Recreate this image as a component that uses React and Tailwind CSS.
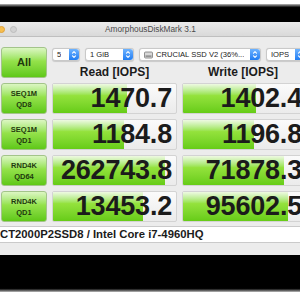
import React from 'react';

const rows = [
    { l1: 'SEQ1M', l2: 'QD8', read: '1470.7', readBar: 74, write: '1402.4', writeBar: 73 },
    { l1: 'SEQ1M', l2: 'QD1', read: '1184.8', readBar: 71, write: '1196.8', writeBar: 71 },
    { l1: 'RND4K', l2: 'QD64', read: '262743.8', readBar: 112, write: '71878.3', writeBar: 101 },
    { l1: 'RND4K', l2: 'QD1', read: '13453.2', readBar: 90, write: '95602.5', writeBar: 105 },
];

const Stepper = () => (
    <div className="w-[10px] h-full rounded-r-[3px] bg-linear-to-b from-[#6db3ff] to-[#1d7cf2] flex items-center justify-center">
        <svg width="6" height="9" viewBox="0 0 6 9" fill="none" stroke="white" strokeWidth="1.1" strokeLinecap="round" strokeLinejoin="round">
            <path d="M1.5 3.2L3 1.7l1.5 1.5" />
            <path d="M1.5 5.8L3 7.3l1.5-1.5" />
        </svg>
    </div>
);

const Select = ({ width, children }) => (
    <div
        className="h-[13px] bg-white rounded-[3px] border border-[#c9c9c9] shadow-[0_0.5px_1px_rgba(0,0,0,0.15)] flex items-stretch justify-between shrink-0"
        style={{ width }}
    >
        <div className="flex items-center gap-[3px] pl-[4px] text-[7.6px] leading-none text-[#222] whitespace-nowrap overflow-hidden">
            {children}
        </div>
        <Stepper />
    </div>
);

const ValueCell = ({ value, bar }) => (
    <div className="relative h-[31px] rounded-[2px] border border-[#d3d3d3] bg-linear-to-b from-[#fbfbfb] to-[#ebebeb] overflow-hidden">
        <div
            className="absolute left-0 top-0 bottom-0 bg-linear-to-b from-[#eef9e2] via-[#94e23c] via-40% to-[#66cc16]"
            style={{ width: bar }}
        />
        <div className="relative h-full flex items-center justify-end pr-[4px] text-[27px] font-bold leading-none text-[#1b1b1b] tracking-[-0.2px]">
            {value}
        </div>
    </div>
);

const LabelButton = ({ children }) => (
    <div className="h-[31px] rounded-[3px] border border-[#a3c48a] bg-linear-to-b from-[#dcf6c2] via-[#94e24a] via-45% to-[#5fc816] flex flex-col items-center justify-center text-[7.5px] font-bold leading-[11px] text-[#1f3a0e]">
        {children}
    </div>
);

export default function App() {
    return (
        <div className="w-[300px] h-[300px] overflow-hidden bg-black flex flex-col" style={{ fontFamily: '"Liberation Sans", Arial, sans-serif' }}>
            {/* top edge */}
            <div className="h-[4px] bg-white shrink-0" />
            <div className="h-[4px] bg-linear-to-b from-[#bdbdbd] to-black shrink-0" />
            <div className="h-[14px] bg-black shrink-0" />

            {/* title bar */}
            <div className="h-[15px] shrink-0 bg-linear-to-b from-[#ebebeb] to-[#d9d9d9] border-b border-[#bfbfbf] flex items-center">
                <div className="-ml-[2px] flex items-center gap-[5px]">
                    <div className="w-[7px] h-[7px] rounded-full bg-[#f6be4f] border border-[#dfa23a]" />
                    <div className="w-[7px] h-[7px] rounded-full bg-[#d2d2d2] border border-[#bdbdbd]" />
                </div>
                <div className="ml-[88px] text-[8.3px] leading-none text-[#4a4a4a] whitespace-nowrap">AmorphousDiskMark 3.1</div>
            </div>

            {/* content */}
            <div className="h-[218px] shrink-0 bg-[#ececec] pt-[10px] overflow-hidden">
                <div className="grid grid-cols-[46px_125px_125px] gap-x-[5px] gap-y-[5px] ml-[1px]">
                    <div className="h-[31px] rounded-[3px] border border-[#a3c48a] bg-linear-to-b from-[#dcf6c2] via-[#94e24a] via-45% to-[#5fc816] flex items-center justify-center text-[11px] font-bold text-[#1f3a0e]">
                        All
                    </div>
                    <div className="col-span-2 flex flex-col">
                        <div className="flex gap-[5px] mt-[1px] w-[260px]">
                            <Select width={28}>5</Select>
                            <Select width={49}>1 GiB</Select>
                            <Select width={122}>
                                <svg width="9" height="8" viewBox="0 0 9 8">
                                    <rect x="0.5" y="1" width="8" height="6" rx="1" fill="#d8d8d8" stroke="#7a7a7a" strokeWidth="0.8" />
                                    <rect x="1.5" y="4.5" width="6" height="1.2" fill="#7a7a7a" />
                                </svg>
                                <span>CRUCIAL SSD V2 (36%...</span>
                            </Select>
                            <Select width={40}>IOPS</Select>
                        </div>
                        <div className="grid grid-cols-[125px_125px] gap-x-[5px] mt-[5px]">
                            <div className="text-center text-[12px] font-bold leading-[12px] text-[#1b1b1b]">Read [IOPS]</div>
                            <div className="text-center text-[12px] font-bold leading-[12px] text-[#1b1b1b] -ml-[3px]">Write [IOPS]</div>
                        </div>
                    </div>

                    {rows.map((r) => (
                        <React.Fragment key={r.l1 + r.l2}>
                            <LabelButton>
                                <span>{r.l1}</span>
                                <span>{r.l2}</span>
                            </LabelButton>
                            <ValueCell value={r.read} bar={r.readBar} />
                            <ValueCell value={r.write} bar={r.writeBar} />
                        </React.Fragment>
                    ))}
                </div>

                <div className="mt-[4px] -ml-[4px] w-[320px] h-[17px] bg-white border border-[#cacaca] flex items-center pl-[3px] text-[11.3px] font-bold text-[#1b1b1b] whitespace-nowrap">
                    CT2000P2SSD8 / Intel Core i7-4960HQ
                </div>
            </div>

            {/* bottom edge */}
            <div className="h-[33px] bg-black shrink-0" />
            <div className="h-[4px] bg-linear-to-b from-black to-[#bdbdbd] shrink-0" />
            <div className="flex-1 bg-white" />
        </div>
    );
}
